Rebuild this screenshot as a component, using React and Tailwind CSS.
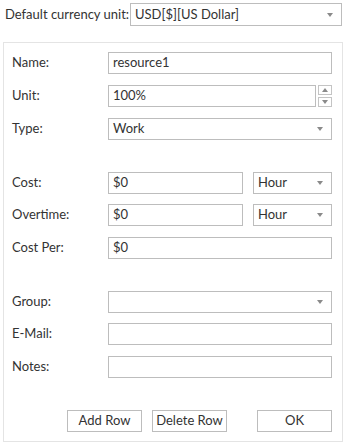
import { useState } from "react";

const font = { fontFamily: 'Lato, "Liberation Sans", sans-serif' };

function Caret() {
  return <span className="h-0 w-0 border-x-[3px] border-t-[4px] border-x-transparent border-t-[#8a8a8a]" />;
}

function Field({ value = "", className = "" }) {
  return (
    <div className={`flex h-[22px] items-center whitespace-nowrap border border-[#bdbdbd] bg-white px-[4px] text-[13px] text-[#333] ${className}`}>
      {value}
    </div>
  );
}

function Select({ value = "", className = "" }) {
  return (
    <div className={`flex h-[22px] items-center justify-between whitespace-nowrap border border-[#bdbdbd] bg-white pl-[4px] pr-[8px] text-[13px] text-[#333] ${className}`}>
      <span>{value}</span>
      <Caret />
    </div>
  );
}

function Row({ label, children, className = "" }) {
  return (
    <div className={`flex items-center ${className}`}>
      <span className="w-[96px] shrink-0 whitespace-nowrap text-[13px] text-[#333]">{label}</span>
      <div className="flex flex-1 items-center">{children}</div>
    </div>
  );
}

export default function App() {
  const [currency] = useState("USD[$][US Dollar]");

  return (
    <div className="h-[444px] w-[344px] overflow-hidden bg-white pt-[3px]" style={font}>
      <div className="flex items-center pl-[5px]">
        <span className="w-[125px] shrink-0 whitespace-nowrap text-[13px] text-[#333]">Default currency unit:</span>
        <Select value={currency} className="h-[23px] w-[212px]" />
      </div>

      <div className="ml-[3px] mt-[16px] h-[400px] w-[340px] border border-[#e4e4e4] pl-[8px] pr-[10px] pt-[9px]">
        <Row label="Name:">
          <Field value="resource1" className="flex-1" />
        </Row>
        <Row label="Unit:" className="mt-[11px]">
          <Field value="100%" className="flex-1" />
          <div className="ml-[2px] flex w-[14px] flex-col gap-[2px]">
            <div className="flex h-[10px] items-center justify-center border border-[#c4c4c4]">
              <span className="h-0 w-0 border-x-[3px] border-b-[4px] border-x-transparent border-b-[#8a8a8a]" />
            </div>
            <div className="flex h-[10px] items-center justify-center border border-[#c4c4c4]">
              <Caret />
            </div>
          </div>
        </Row>
        <Row label="Type:" className="mt-[11px]">
          <Select value="Work" className="flex-1" />
        </Row>

        <Row label="Cost:" className="mt-[32px]">
          <Field value="$0" className="w-[135px]" />
          <Select value="Hour" className="ml-[10px] flex-1" />
        </Row>
        <Row label="Overtime:" className="mt-[10px]">
          <Field value="$0" className="w-[135px]" />
          <Select value="Hour" className="ml-[10px] flex-1" />
        </Row>
        <Row label="Cost Per:" className="mt-[11px]">
          <Field value="$0" className="flex-1" />
        </Row>

        <Row label="Group:" className="mt-[32px]">
          <Select className="flex-1" />
        </Row>
        <Row label="E-Mail:" className="mt-[10px]">
          <Field className="flex-1" />
        </Row>
        <Row label="Notes:" className="mt-[11px]">
          <Field className="flex-1" />
        </Row>

        <div className="mt-[32px] flex justify-end">
          <button className="h-[22px] w-[75px] border border-[#bdbdbd] bg-white text-[13px] text-[#333]">Add Row</button>
          <button className="ml-[10px] h-[22px] w-[75px] border border-[#bdbdbd] bg-white text-[13px] text-[#333]">Delete Row</button>
          <button className="ml-[30px] h-[22px] w-[75px] border border-[#bdbdbd] bg-white text-[13px] text-[#333]">OK</button>
        </div>
      </div>
    </div>
  );
}
